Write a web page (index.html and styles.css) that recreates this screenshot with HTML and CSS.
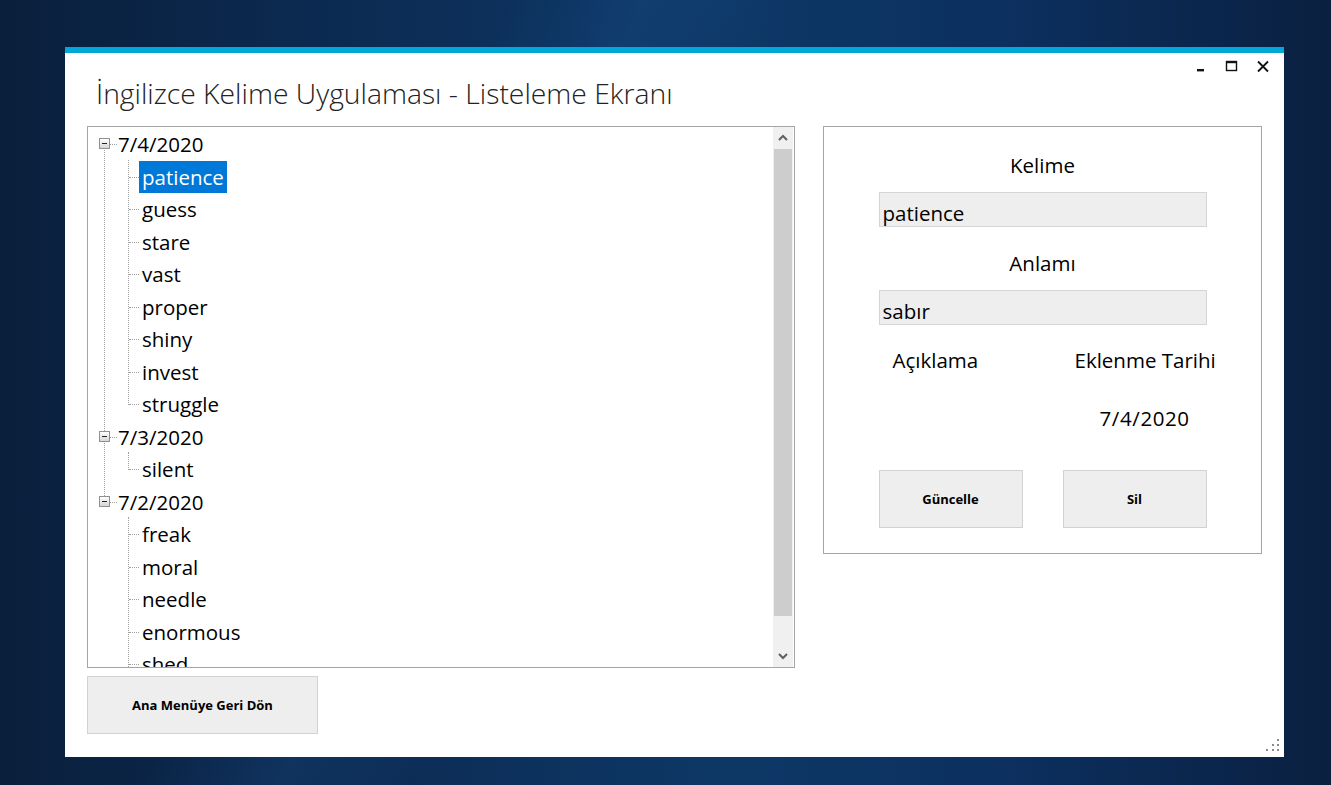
FILE: index.html
```html
<!DOCTYPE html>
<html lang="tr">
<head>
<meta charset="utf-8">
<title>İngilizce Kelime Uygulaması - Listeleme Ekranı</title>
<link rel="stylesheet" href="styles.css">
</head>
<body>
<div class="desktop">
  <div class="window">
    <div class="controls">
      <svg class="ctl" width="14" height="14" viewBox="0 0 14 14"><rect x="3" y="9" width="7" height="2.4" fill="#111"/></svg>
      <svg class="ctl" width="14" height="14" viewBox="0 0 14 14"><rect x="1.5" y="1.5" width="10" height="9" fill="none" stroke="#111" stroke-width="1.4"/><rect x="1.5" y="1" width="10" height="2.2" fill="#111"/></svg>
      <svg class="ctl" width="14" height="14" viewBox="0 0 14 14"><path d="M2 1.5 L12 11.5 M12 1.5 L2 11.5" stroke="#111" stroke-width="1.8" fill="none"/></svg>
    </div>
    <header class="head">
      <h1 class="title">İngilizce Kelime Uygulaması - Listeleme Ekranı</h1>
    </header>
    <div class="main">
      <div class="left">
        <div class="treebox">
          <div class="tree">
            <div class="group">
              <div class="row root"><span class="exp"></span><span class="lbl">7/4/2020</span></div>
              <div class="children">
                <div class="row child"><span class="lbl sel">patience</span></div>
                <div class="row child"><span class="lbl">guess</span></div>
                <div class="row child"><span class="lbl">stare</span></div>
                <div class="row child"><span class="lbl">vast</span></div>
                <div class="row child"><span class="lbl">proper</span></div>
                <div class="row child"><span class="lbl">shiny</span></div>
                <div class="row child"><span class="lbl">invest</span></div>
                <div class="row child"><span class="lbl">struggle</span></div>
              </div>
            </div>
            <div class="group">
              <div class="row root"><span class="exp"></span><span class="lbl">7/3/2020</span></div>
              <div class="children">
                <div class="row child"><span class="lbl">silent</span></div>
              </div>
            </div>
            <div class="group last">
              <div class="row root"><span class="exp"></span><span class="lbl">7/2/2020</span></div>
              <div class="children open">
                <div class="row child"><span class="lbl">freak</span></div>
                <div class="row child"><span class="lbl">moral</span></div>
                <div class="row child"><span class="lbl">needle</span></div>
                <div class="row child"><span class="lbl">enormous</span></div>
                <div class="row child"><span class="lbl">shed</span></div>
              </div>
            </div>
          </div>
          <div class="scrollbar">
            <div class="sb-btn"><svg width="10" height="8" viewBox="0 0 10 8"><path d="M1 6 L5 2 L9 6" stroke="#606060" stroke-width="2" fill="none"/></svg></div>
            <div class="sb-track"><div class="sb-thumb"></div></div>
            <div class="sb-btn"><svg width="10" height="8" viewBox="0 0 10 8"><path d="M1 2 L5 6 L9 2" stroke="#606060" stroke-width="2" fill="none"/></svg></div>
          </div>
        </div>
        <button class="btn back">Ana Menüye Geri Dön</button>
      </div>
      <div class="panel">
        <div class="plabel first">Kelime</div>
        <div class="field">patience</div>
        <div class="plabel">Anlamı</div>
        <div class="field">sabır</div>
        <div class="pair labels">
          <div class="cell lab-a">Açıklama</div>
          <div class="cell lab-b">Eklenme Tarihi</div>
        </div>
        <div class="pair dates">
          <div class="cell"></div>
          <div class="cell date">7/4/2020</div>
        </div>
        <div class="pair buttons">
          <button class="btn small">Güncelle</button>
          <button class="btn small">Sil</button>
        </div>
      </div>
    </div>
    <div class="grip">
      <svg width="14" height="14" viewBox="0 0 14 14" fill="#8c8c8c">
        <rect x="11" y="0" width="2" height="2"/>
        <rect x="6" y="5" width="2" height="2"/><rect x="11" y="5" width="2" height="2"/>
        <rect x="0" y="10" width="2" height="2"/><rect x="6" y="10" width="2" height="2"/><rect x="11" y="10" width="2" height="2"/>
      </svg>
    </div>
  </div>
</div>
</body>
</html>
```

FILE: styles.css
```css
html, body {
  margin: 0;
  padding: 0;
  height: 100%;
}
body {
  background: #0b2748;
  overflow: hidden;
}
.desktop {
  width: 1331px;
  height: 785px;
  padding: 47px 0 0 65px;
  box-sizing: border-box;
  background:
    linear-gradient(115deg, rgba(255,255,255,0) 30%, rgba(40,110,190,0.14) 38%, rgba(255,255,255,0) 46%),
    linear-gradient(90deg, #0a1f3c 0%, #0c2d56 30%, #0d3866 55%, #0c3060 75%, #0a2040 100%);
}
.window {
  position: relative;
  width: 1219px;
  height: 710px;
  background: #fff;
  border-top: 6px solid #00a8d9;
  box-sizing: border-box;
  font-family: "Open Sans", "Noto Sans", sans-serif;
  color: #000;
}
.controls {
  position: absolute;
  top: 7px;
  right: 14px;
  display: flex;
  gap: 17px;
}
.ctl { display: block; }
.head {
  height: 73px;
  padding-left: 31px;
  box-sizing: border-box;
  padding-top: 22px;
}
.title {
  margin: 0;
  font-weight: 300;
  font-size: 28.3px;
  line-height: 36px;
  color: #222;
  letter-spacing: 0;
  white-space: nowrap;
}
.main {
  display: flex;
  gap: 28px;
  padding: 0 22px;
}
.left {
  display: flex;
  flex-direction: column;
  gap: 8px;
}
.treebox {
  width: 708px;
  height: 542px;
  border: 1px solid #a5a5a5;
  box-sizing: border-box;
  display: flex;
  overflow: hidden;
  background: #fff;
}
.tree {
  flex: 1;
  padding-top: 1px;
  overflow: hidden;
  font-size: 20.5px;
}
.group { position: relative; }
.group::before {
  content: "";
  position: absolute;
  left: 16px;
  top: 16px;
  bottom: -16px;
  border-left: 1px dotted #a0a0a0;
}
.group.last::before { display: none; }
.row {
  position: relative;
  height: 32.5px;
  display: flex;
  align-items: center;
  white-space: nowrap;
}
.root { padding-left: 11px; }
.root::before {
  content: "";
  position: absolute;
  left: 21px;
  top: 16px;
  width: 8px;
  border-top: 1px dotted #a0a0a0;
}
.exp {
  position: relative;
  z-index: 1;
  width: 11px;
  height: 11px;
  box-sizing: border-box;
  border: 1px solid #919191;
  background: linear-gradient(#ffffff, #d6d6d6);
  margin-right: 5px;
  margin-top: -1px;
}
.exp::after {
  content: "";
  position: absolute;
  left: 2px;
  top: 4px;
  width: 5px;
  height: 1px;
  background: #222;
}
.lbl {
  padding: 0 3px;
  line-height: 32px;
  height: 32px;
}
.sel {
  background: #0078d7;
  color: #fff;
}
.children { position: relative; }
.children::before {
  content: "";
  position: absolute;
  left: 40px;
  top: -1px;
  bottom: 16px;
  border-left: 1px dotted #a0a0a0;
}
.children.open::before { bottom: 0; }
.child { padding-left: 51px; }
.child::before {
  content: "";
  position: absolute;
  left: 41px;
  top: 16px;
  width: 10px;
  border-top: 1px dotted #a0a0a0;
}
.scrollbar {
  width: 20px;
  margin-right: 1px;
  background: #f0f0f0;
  display: flex;
  flex-direction: column;
}
.sb-btn {
  height: 22px;
  display: flex;
  align-items: center;
  justify-content: center;
}
.sb-track {
  flex: 1;
  padding: 0 1px;
}
.sb-thumb {
  height: 467px;
  background: #cdcdcd;
}
.btn {
  font-family: "Open Sans", "Noto Sans", sans-serif;
  font-weight: 700;
  font-size: 13px;
  color: #000;
  background: #eeeeee;
  border: 1px solid #d2d2d2;
  padding: 0;
  margin: 0;
}
.back {
  width: 231px;
  height: 58px;
}
.panel {
  width: 439px;
  height: 428px;
  border: 1px solid #a5a5a5;
  box-sizing: border-box;
  display: flex;
  flex-direction: column;
  align-items: center;
  font-size: 20.5px;
}
.plabel {
  line-height: 28px;
  margin-top: 22px;
}
.plabel.first { margin-top: 24px; }
.field {
  width: 328px;
  height: 35px;
  margin-top: 13px;
  box-sizing: border-box;
  background: #eeeeee;
  border: 1px solid #d5d5d5;
  padding-left: 3px;
  line-height: 40px;
  font-size: 20.5px;
}
.pair {
  width: 328px;
  display: grid;
  grid-template-columns: 144px 144px;
  column-gap: 40px;
}
.labels { margin-top: 21px; line-height: 28px; }
.cell { white-space: nowrap; }
.lab-a { padding-left: 14px; }
.lab-b { padding-left: 12px; }
.dates { margin-top: 30px; line-height: 28px; height: 28px; }
.date { padding-left: 37px; letter-spacing: 0.6px; }
.buttons { margin-top: 38px; }
.small {
  height: 58px;
  width: 144px;
}
.grip {
  position: absolute;
  right: 4px;
  bottom: 4px;
  line-height: 0;
}
```
